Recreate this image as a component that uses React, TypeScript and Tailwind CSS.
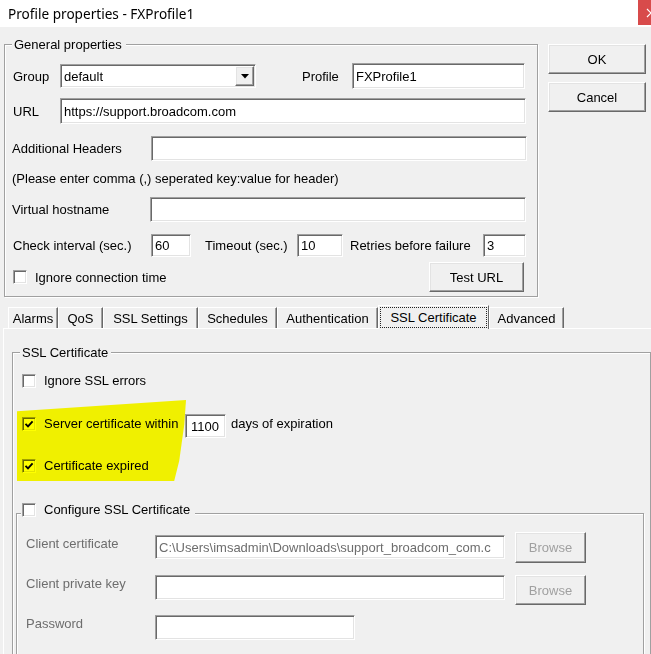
import type { ReactNode } from "react";

const sunken =
  "bg-white border border-t-[#a0a0a0] border-l-[#a0a0a0] border-r-white border-b-white shadow-[inset_1px_1px_0_#696969,inset_-1px_-1px_0_#e3e3e3]";
const raised =
  "bg-[#f0f0f0] border border-t-white border-l-white border-r-[#696969] border-b-[#696969] shadow-[inset_-1px_-1px_0_#a0a0a0,inset_1px_1px_0_#e3e3e3]";

function Edit({ className, value, disabled }: { className: string; value?: string; disabled?: boolean }) {
  return (
    <div
      className={`${sunken} ${className} shrink-0 flex items-center pl-[3px] overflow-hidden whitespace-nowrap ${
        disabled ? "text-[#6d6d6d]" : "text-black"
      }`}
    >
      {value}
    </div>
  );
}

function CheckBox({ checked }: { checked?: boolean }) {
  return (
    <span className={`${sunken} w-[14px] h-[14px] shrink-0 flex items-center justify-center`}>
      {checked && (
        <svg width="10" height="10" viewBox="0 0 10 10">
          <path d="M1.5 4.8 L4 7.3 L8.6 2.4" fill="none" stroke="#000" strokeWidth="1.9" />
        </svg>
      )}
    </span>
  );
}

function Group({
  className,
  legendClassName,
  legend,
  children,
}: {
  className: string;
  legendClassName: string;
  legend: ReactNode;
  children: ReactNode;
}) {
  return (
    <div className={`relative shrink-0 border border-[#a0a0a0] shadow-[inset_1px_1px_0_#fff,1px_1px_0_#fff] ${className}`}>
      <div className={`absolute bg-[#f0f0f0] whitespace-nowrap leading-[15px] ${legendClassName}`}>{legend}</div>
      {children}
    </div>
  );
}

const tabs = [
  { label: "Alarms", w: "w-[50px]" },
  { label: "QoS", w: "w-[45px]" },
  { label: "SSL Settings", w: "w-[95px]" },
  { label: "Schedules", w: "w-[79px]" },
  { label: "Authentication", w: "w-[101px]" },
  { label: "SSL Certificate", w: "w-[111px]", active: true },
  { label: "Advanced", w: "w-[75px]" },
];

export default function App() {
  return (
    <div className="w-[651px] h-[654px] overflow-hidden bg-[#f0f0f0] text-black text-[13px] leading-[15px] font-['Liberation_Sans',Arial,sans-serif]">
      {/* title bar */}
      <div className="h-[27px] bg-white flex items-start">
        <div className="flex-1 pl-[8px] pt-[4px] text-[13.6px] leading-[19px] font-['Noto_Sans',sans-serif]">
          Profile properties - FXProfile1
        </div>
        {/* close button, cut by the screenshot edge */}
        <div className="w-[13px] h-[25px] bg-[#d84b4b] overflow-hidden pl-[8px] pt-[8px]">
          <svg width="10" height="10" viewBox="0 0 10 10" className="block">
            <path d="M1 1L9 9M9 1L1 9" stroke="#fff" strokeWidth="1.2" />
          </svg>
        </div>
      </div>

      {/* general properties + dialog buttons */}
      <div className="flex items-start pl-[4px]">
        <Group
          className="mt-[17px] w-[534px] h-[253px]"
          legendClassName="-top-[8px] left-[7px] pl-[2px] pr-[4px]"
          legend="General properties"
        >
          <div className="mt-[18px] h-[26px] pl-[8px] flex items-center">
            <span className="w-[47px] shrink-0">Group</span>
            <div className={`${sunken} w-[196px] h-[24px] shrink-0 flex items-center`}>
              <span className="flex-1 pl-[3px]">default</span>
              <span className={`${raised} w-[19px] h-[20px] mr-[1px] flex items-center justify-center`}>
                <svg width="8" height="5" viewBox="0 0 8 5">
                  <path d="M0 0h8L4 4.5z" fill="#000" />
                </svg>
              </span>
            </div>
            <span className="ml-[46px] w-[50px] shrink-0">Profile</span>
            <Edit className="w-[173px] h-[26px]" value="FXProfile1" />
          </div>

          <div className="mt-[9px] h-[26px] pl-[8px] flex items-center">
            <span className="w-[47px] shrink-0">URL</span>
            <Edit className="w-[466px] h-[26px]" value="https://support.broadcom.com" />
          </div>

          <div className="mt-[12px] h-[25px] pl-[7px] flex items-center">
            <span className="w-[139px] shrink-0">Additional Headers</span>
            <Edit className="w-[376px] h-[25px]" />
          </div>

          <div className="mt-[11px] pl-[7px] leading-[14px] whitespace-nowrap">
            (Please enter comma (,) seperated key:value for header)
          </div>

          <div className="mt-[11px] h-[25px] pl-[7px] flex items-center">
            <span className="w-[138px] shrink-0">Virtual hostname</span>
            <Edit className="w-[376px] h-[25px]" />
          </div>

          <div className="mt-[12px] h-[23px] pl-[8px] flex items-center whitespace-nowrap">
            <span className="w-[138px] shrink-0">Check interval (sec.)</span>
            <Edit className="w-[40px] h-[23px]" value="60" />
            <span className="ml-[14px] w-[92px] shrink-0">Timeout (sec.)</span>
            <Edit className="w-[46px] h-[23px]" value="10" />
            <span className="ml-[7px] w-[133px] shrink-0">Retries before failure</span>
            <Edit className="w-[43px] h-[23px]" value="3" />
          </div>

          <div className="mt-[5px] h-[30px] pl-[8px] pr-[13px] flex items-center">
            <CheckBox />
            <span className="ml-[8px] flex-1">Ignore connection time</span>
            <button className={`${raised} w-[95px] h-[30px]`}>Test URL</button>
          </div>
        </Group>

        <div className="ml-[10px] mt-[17px] flex flex-col gap-[8px]">
          <button className={`${raised} w-[98px] h-[30px]`}>OK</button>
          <button className={`${raised} w-[98px] h-[30px]`}>Cancel</button>
        </div>
      </div>

      {/* tab strip */}
      <div className="mt-[10px] pl-[8px] h-[21px] flex items-end">
        {tabs.map((t) =>
          t.active ? (
            <div
              key={t.label}
              className={`${t.w} h-[24px] -mb-[1px] relative z-10 shrink-0 bg-[#f0f0f0] border-t border-l border-t-white border-l-white border-r border-r-[#696969] flex items-stretch p-[1px]`}
            >
              <span className="flex-1 border border-dotted border-[#222] flex items-center justify-center whitespace-nowrap">
                {t.label}
              </span>
            </div>
          ) : (
            <div
              key={t.label}
              className={`${t.w} h-[21px] shrink-0 border-t border-l border-t-white border-l-white border-r border-r-[#696969] shadow-[inset_-1px_0_0_#a0a0a0] flex items-center justify-center whitespace-nowrap`}
            >
              {t.label}
            </div>
          )
        )}
      </div>

      {/* tab page */}
      <div className="ml-[3px] w-[660px] h-[400px] border-t border-l border-t-white border-l-white">
        <Group
          className="mt-[23px] ml-[8px] w-[639px] h-[400px]"
          legendClassName="-top-[8px] left-[7px] pl-[2px] pr-[3px]"
          legend="SSL Certificate"
        >
          <div className="mt-[20px] h-[15px] pl-[9px] flex items-center">
            <CheckBox />
            <span className="ml-[8px]">Ignore SSL errors</span>
          </div>

          <div className="mt-[26px] h-[24px] pl-[9px] flex items-start whitespace-nowrap">
            <span className="mt-[3px] flex">
              <CheckBox checked />
            </span>
            <span className="ml-[8px] mt-[2px] w-[141px] shrink-0">Server certificate within</span>
            <Edit className="w-[41px] h-[24px] pl-[5px]" value="1100" />
            <span className="ml-[5px] mt-[2px]">days of expiration</span>
          </div>

          <div className="mt-[20px] h-[15px] pl-[9px] flex items-center">
            <CheckBox checked />
            <span className="ml-[8px]">Certificate expired</span>
          </div>

          <Group
            className="mt-[40px] ml-[3px] w-[628px] h-[200px]"
            legendClassName="-top-[12px] left-[4px] pl-[1px] pr-[5px] flex items-center"
            legend={
              <>
                <CheckBox />
                <span className="ml-[8px]">Configure SSL Certificate</span>
              </>
            }
          >
            <div className="mt-[18px] pl-[9px] flex items-start">
              <span className="mt-[4px] w-[129px] shrink-0 text-[#6d6d6d]">Client certificate</span>
              <Edit
                className="w-[350px] h-[24px] mt-[3px] pl-[2px]"
                value="C:\Users\imsadmin\Downloads\support_broadcom_com.c"
                disabled
              />
              <button className={`${raised} ml-[10px] w-[71px] h-[31px] text-[#a0a0a0]`}>Browse</button>
            </div>

            <div className="mt-[12px] pl-[9px] flex items-start">
              <span className="mt-[1px] w-[129px] shrink-0 text-[#6d6d6d]">Client private key</span>
              <Edit className="w-[350px] h-[25px]" disabled />
              <button className={`${raised} ml-[10px] w-[71px] h-[30px] text-[#a0a0a0]`}>Browse</button>
            </div>

            <div className="mt-[10px] pl-[9px] flex items-start">
              <span className="mt-[1px] w-[129px] shrink-0 text-[#6d6d6d]">Password</span>
              <Edit className="w-[200px] h-[25px]" disabled />
            </div>
          </Group>

          {/* highlighter mark */}
          <div className="absolute left-[4px] top-[47px] w-[169px] h-[81px] bg-[#ffff00] mix-blend-multiply pointer-events-none [clip-path:polygon(0_14%,100%_0,99%_30%,96%_75%,93%_100%,0_100%)]" />
        </Group>
      </div>
    </div>
  );
}
